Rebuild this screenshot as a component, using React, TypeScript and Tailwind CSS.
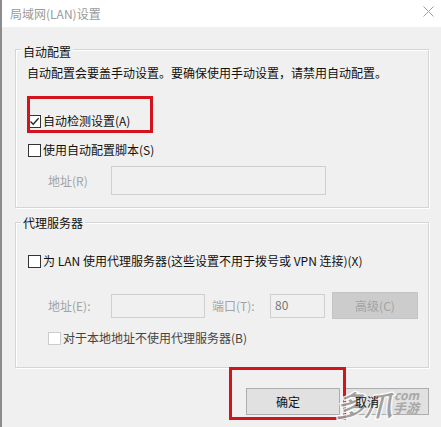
import React from "react";

const font = { fontFamily: '"Noto Sans CJK SC", "Noto Sans", sans-serif' };

function Box({ checked, disabled }: { checked?: boolean; disabled?: boolean }) {
  return (
    <span
      className={`flex h-[13px] w-[13px] shrink-0 items-center justify-center border bg-white ${
        disabled ? "border-[#cccccc]" : "border-[#333333]"
      }`}
    >
      {checked && (
        <svg width="11" height="11" viewBox="0 0 11 11">
          <path d="M1.5 5.5 L4.2 8.3 L9.6 2.2" fill="none" stroke="#222" strokeWidth="1.3" />
        </svg>
      )}
    </span>
  );
}

function Check({ label, checked, disabled, className = "" }: { label: string; checked?: boolean; disabled?: boolean; className?: string }) {
  return (
    <div className={`flex h-[16px] items-center gap-[2px] ${className}`}>
      <Box checked={checked} disabled={disabled} />
      <span className={`whitespace-nowrap text-[12px] leading-[16px] ${disabled ? "text-[#444444]" : "text-[#111111]"}`}>{label}</span>
    </div>
  );
}

export default function App() {
  return (
    <div style={font} className="relative h-[427px] w-[441px] overflow-hidden border-l-2 border-[#8c8c8c] bg-[#f0f0f0] text-[12px] text-[#111]">
      {/* title bar */}
      <div className="flex h-[27px] items-center justify-between bg-white pl-[8px] pr-[7px]">
        <span className="text-[12px] leading-[16px] text-[#9a9a9a]">局域网(LAN)设置</span>
        <svg width="11" height="11" viewBox="0 0 11 11" className="mb-[4px]">
          <path d="M0.5 0.5 L10.5 10.5 M10.5 0.5 L0.5 10.5" stroke="#a0a0a0" strokeWidth="1" />
        </svg>
      </div>

      {/* group 1 */}
      <div className="ml-[13px] mt-[22px] flex w-[414px] flex-col border border-[#d5d5d5] shadow-[1px_1px_0_#ffffff,inset_1px_1px_0_#ffffff]">
        <span className="-mt-[6px] ml-[5px] w-fit bg-[#f0f0f0] px-[2px] leading-[16px]">自动配置</span>
        <span className="ml-[11px] mt-[5px] whitespace-nowrap leading-[16px]">自动配置会要盖手动设置。要确保使用手动设置，请禁用自动配置。</span>
        <Check className="ml-[12px] mt-[32px]" label="自动检测设置(A)" checked />
        <Check className="ml-[12px] mt-[13px]" label="使用自动配置脚本(S)" />
        <div className="mt-[8px] flex items-center">
          <span className="ml-[32px] w-[63px] leading-[16px] text-[#a3a3a3]">地址(R)</span>
          <div className="h-[29px] w-[215px] border border-[#cfcfcf] bg-[#f0f0f0]" />
        </div>
        <div className="h-[12px]" />
      </div>

      {/* group 2 */}
      <div className="ml-[13px] mt-[14px] flex w-[414px] flex-col border border-[#d5d5d5] shadow-[1px_1px_0_#ffffff,inset_1px_1px_0_#ffffff]">
        <span className="-mt-[8px] ml-[5px] w-fit bg-[#f0f0f0] px-[2px] leading-[16px]">代理服务器</span>
        <Check className="ml-[12px] mt-[22px]" label="为 LAN 使用代理服务器(这些设置不用于拨号或 VPN 连接)(X)" />
        <div className="mt-[23px] flex items-center">
          <span className="ml-[32px] w-[63px] leading-[16px] text-[#a3a3a3]">地址(E):</span>
          <div className="h-[24px] w-[94px] border border-[#cfcfcf] bg-[#f0f0f0]" />
          <span className="ml-[7px] w-[58px] leading-[16px] text-[#a3a3a3]">端口(T):</span>
          <div className="flex h-[24px] w-[55px] items-start border border-[#cfcfcf] bg-[#f0f0f0] pl-[4px] pt-[2px] leading-[16px] text-[#777]">80</div>
          <div className="ml-[7px] flex h-[27px] w-[86px] items-center justify-center border border-[#c4c4c4] bg-[#cccccc] leading-[16px] text-[#a3a3a3]">高级(C)</div>
        </div>
        <Check className="ml-[32px] mt-[11px]" label="对于本地地址不使用代理服务器(B)" disabled />
        <div className="h-[21px]" />
      </div>

      {/* buttons */}
      <div className="mt-[20px] flex justify-end gap-[4px] pr-[12px]">
        <div className="flex h-[27px] w-[94px] items-center justify-center border border-[#adadad] bg-[#e1e1e1] pr-[10px] leading-[16px]">确定</div>
        <div className="flex h-[27px] w-[85px] items-center border border-[#adadad] bg-[#e1e1e1] pl-[10px] leading-[16px]">
          <span className="relative z-10">取消</span>
        </div>
      </div>

      {/* annotation boxes */}
      <div className="absolute left-[25px] top-[96px] h-[37px] w-[126px] border-[3px] border-[#d3131d]" />
      <div className="absolute left-[227px] top-[367px] h-[53px] w-[117px] border-[3px] border-[#d3131d]" />

      {/* watermark */}
      <div className="pointer-events-none absolute left-[333px] top-[386px] z-0 flex items-end">
        <span className="text-[30px] font-black italic leading-[36px] tracking-[-2px] text-[#999999] opacity-90 [-webkit-text-stroke:1.2px_#ffffff]">多爪</span>
        <div className="mb-[6px] ml-[2px] flex flex-col items-end">
          <span className="text-[12px] font-bold italic leading-[11px] text-[#a8a8a8]">com</span>
          <span className="text-[13px] font-bold italic leading-[16px] text-[#a8a8a8]">手游</span>
        </div>
      </div>
    </div>
  );
}
